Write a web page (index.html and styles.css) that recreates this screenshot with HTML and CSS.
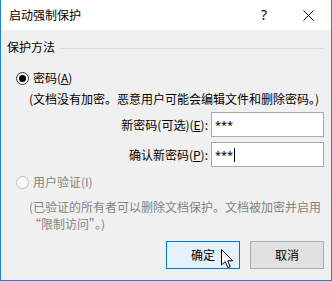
FILE: index.html
```html
<!DOCTYPE html>
<html lang="zh-CN">
<head>
<meta charset="utf-8">
<title>启动强制保护</title>
<link rel="stylesheet" href="styles.css">
</head>
<body>
<div class="window">
  <div class="titlebar">
    <div class="title">启动强制保护</div>
    <div class="tb-help">?</div>
    <div class="tb-close">
      <svg width="11" height="11" viewBox="0 0 11 11"><path d="M0.5 0.5 L10.5 10.5 M10.5 0.5 L0.5 10.5" stroke="#000" stroke-width="1" fill="none"/></svg>
    </div>
  </div>
  <div class="content">
    <div class="group-head">
      <span class="group-label">保护方法</span>
      <span class="group-line"></span>
    </div>

    <div class="radio-row">
      <span class="radio checked"><span class="dot"></span></span>
      <span class="radio-text">密码(<u>A</u>)</span>
    </div>
    <div class="desc one">(文档没有加密。恶意用户可能会编辑文件和删除密码。)</div>

    <div class="fields">
      <div class="flabel">新密码(可选)(<u>E</u>):</div>
      <div class="textbox">***</div>
      <div class="flabel">确认新密码(<u>P</u>):</div>
      <div class="textbox">***<span class="caret"></span></div>
    </div>

    <div class="radio-row second disabled">
      <span class="radio"></span>
      <span class="radio-text">用户验证(I)</span>
    </div>
    <div class="desc two disabled">(已验证的所有者可以删除文档保护。文档被加密并启用<br>“限制访问”。)</div>

    <div class="buttons">
      <div class="btn primary">确定
        <svg class="cursor" width="13" height="20" viewBox="0 0 13 20"><path d="M0.5 0.5 L0.5 16 L4.2 12.6 L6.8 18.6 L9.2 17.6 L6.7 11.8 L11.6 11.8 Z" fill="#fff" stroke="#000" stroke-width="1" stroke-linejoin="miter"/></svg>
      </div>
      <div class="btn">取消</div>
    </div>
  </div>
</div>
</body>
</html>
```

FILE: styles.css
```css
* { box-sizing: border-box; }
html, body { margin: 0; padding: 0; }
body {
  width: 332px;
  height: 281px;
  overflow: hidden;
  font-family: "Noto Sans CJK SC", "Noto Sans", sans-serif;
  font-size: 12px;
  color: #000;
  background: #fff;
}
.window {
  width: 332px;
  height: 281px;
  border-left: 1px solid #1883d7;
  border-right: 1px solid #1883d7;
  border-bottom: 1px solid #1883d7;
  background: #f0f0f0;
  display: flex;
  flex-direction: column;
}
.titlebar {
  height: 30px;
  background: #fff;
  display: flex;
  align-items: center;
  padding-left: 8px;
}
.title {
  flex: 1;
  font-size: 12px;
  line-height: 16px;
}
.tb-help {
  width: 10px;
  font-family: "Noto Sans", sans-serif;
  font-size: 14px;
  line-height: 16px;
  margin-right: 32px;
  margin-top: -1px;
}
.tb-close {
  width: 11px;
  height: 11px;
  margin-right: 17px;
  margin-top: 0px;
  display: flex;
}
.content {
  flex: 1;
  padding: 9px 7px 0 6px;
  display: flex;
  flex-direction: column;
}
.group-head {
  display: flex;
  align-items: center;
  height: 16px;
  line-height: 16px;
}
.group-label { white-space: nowrap; margin-left: 0px; }
.group-line {
  flex: 1;
  height: 1px;
  background: #dcdcdc;
  margin-left: 5px;
  margin-top: 2px;
}
.radio-row {
  display: flex;
  align-items: center;
  height: 16px;
  line-height: 16px;
  margin-top: 15px;
  padding-left: 9px;
}
.radio-row.second { margin-top: 7px; }
.radio {
  width: 13px;
  height: 13px;
  border-radius: 50%;
  border: 1px solid #333;
  background: #fff;
  display: flex;
  align-items: center;
  justify-content: center;
  margin-right: 4px;
}
.radio .dot {
  width: 7px;
  height: 7px;
  border-radius: 50%;
  background: #000;
}
.disabled .radio { border-color: #bcbcbc; background: #f8f8f8; }
.disabled, .desc.disabled { color: #838383; }
.desc {
  margin-left: 22px;
  white-space: nowrap;
}
.desc.one { margin-top: 5px; line-height: 16px; }
.desc.two { margin-top: 8px; line-height: 17px; }
.fields {
  margin-top: 5px;
  display: grid;
  grid-template-columns: 1fr 113px;
  grid-auto-rows: 25px;
  row-gap: 5px;
  column-gap: 3px;
}
.flabel {
  text-align: right;
  line-height: 25px;
  white-space: nowrap;
}
.textbox {
  background: #fff;
  border: 1px solid #a9a9a9;
  padding-left: 3px;
  line-height: 20px;
  display: flex;
  align-items: center;
  font-family: "Noto Sans", sans-serif;
  font-size: 11px;
}
.caret {
  display: inline-block;
  width: 1px;
  height: 14px;
  background: #000;
  margin-left: 1px;
}
.buttons {
  margin-top: 9px;
  display: flex;
  justify-content: flex-end;
  gap: 10px;
}
.btn {
  position: relative;
  width: 74px;
  height: 28px;
  border: 1px solid #adadad;
  background: #e1e1e1;
  display: flex;
  align-items: center;
  justify-content: center;
  line-height: 16px;
}
.btn.primary {
  border-color: #0078d7;
  background: #e5f1fb;
}
.cursor {
  position: absolute;
  left: 54px;
  top: 7px;
}
```
